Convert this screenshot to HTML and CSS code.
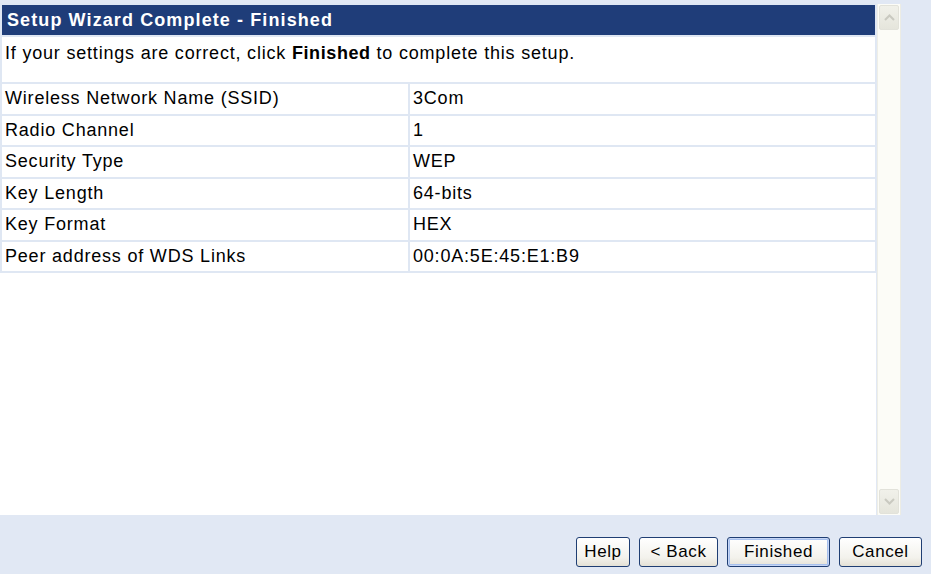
FILE: index.html
```html
<!DOCTYPE html>
<html lang="en">

<head>
  <meta charset="UTF-8">
  <title>Setup Wizard Complete</title>
  <link rel="stylesheet" href="styles.css">
</head>

<body>
  <!-- wizard frame with its own scrollbar -->
  <div class="frame">
    <div class="content">
      <table class="wizard">
        <tr>
          <th class="title" colspan="2">Setup Wizard Complete - Finished</th>
        </tr>
        <tr>
          <td class="intro" colspan="2">If your settings are correct, click <b>Finished</b> to complete this setup.</td>
        </tr>
        <tr>
          <td class="label">Wireless Network Name (SSID)</td>
          <td>3Com</td>
        </tr>
        <tr>
          <td class="label">Radio Channel</td>
          <td>1</td>
        </tr>
        <tr>
          <td class="label">Security Type</td>
          <td>WEP</td>
        </tr>
        <tr>
          <td class="label">Key Length</td>
          <td>64-bits</td>
        </tr>
        <tr>
          <td class="label">Key Format</td>
          <td>HEX</td>
        </tr>
        <tr>
          <td class="label">Peer address of WDS Links</td>
          <td>00:0A:5E:45:E1:B9</td>
        </tr>
      </table>
    </div>
    <div class="scrollbar">
      <div class="scroll-btn">
        <svg width="11" height="7" viewBox="0 0 11 7"><path d="M1 6 L5.5 1.5 L10 6" fill="none" stroke="#c9c9c0" stroke-width="2"/></svg>
      </div>
      <div class="scroll-btn">
        <svg width="11" height="7" viewBox="0 0 11 7"><path d="M1 1 L5.5 5.5 L10 1" fill="none" stroke="#c9c9c0" stroke-width="2"/></svg>
      </div>
    </div>
  </div>

  <!-- wizard buttons -->
  <div class="buttons">
    <button class="btn btn-help">Help</button>
    <button class="btn btn-back">&lt; Back</button>
    <button class="btn btn-finish">Finished</button>
    <button class="btn btn-cancel">Cancel</button>
  </div>
</body>

</html>
```
FILE: styles.css
```css
body {
  margin: 0;
  padding: 0;
  background-color: #e1e8f4;
  font-family: "Liberation Sans", Arial, sans-serif;
  font-size: 18px;
  letter-spacing: 0.8px;
  color: #000;
}

.frame {
  display: flex;
  margin-top: 3px;
  width: 901px;
  height: 512px;
}

.content {
  width: 877px;
  background: #fff;
  overflow: hidden;
}

.wizard {
  width: 877px;
  border-collapse: separate;
  border-spacing: 2px;
  background: #dfe7f3;
}

.wizard th,
.wizard td {
  padding: 0 3px;
  background: #fff;
  text-align: left;
  white-space: nowrap;
  height: 29.5px;
}

.wizard th.title {
  background: #1f3d79;
  color: #fff;
  font-weight: bold;
  height: 30px;
  padding-left: 5px;
  letter-spacing: 1.1px;
}

.wizard td.intro {
  height: 45px;
  vertical-align: top;
  padding-top: 6px;
  box-sizing: border-box;
}

.wizard td.intro b {
  letter-spacing: 0.6px;
}

.wizard td.label {
  width: 400px;
}

.scrollbar {
  width: 22px;
  margin-top: 1px;
  margin-left: 1px;
  background: #fcfcf7;
  border-left: 1px solid #eeeee6;
  border-right: 1px solid #ecece4;
  display: flex;
  flex-direction: column;
  justify-content: space-between;
}

.scroll-btn {
  height: 23px;
  margin: 1px 1px;
  background: linear-gradient(#f1f1ea, #e5e5dc);
  border: 1px solid #e2e2da;
  border-radius: 2px;
  display: flex;
  align-items: center;
  justify-content: center;
}

.buttons {
  display: flex;
  justify-content: flex-end;
  gap: 9px;
  padding: 22px 9px 0 0;
}

.btn {
  height: 30px;
  padding: 0;
  font-family: "Liberation Sans", Arial, sans-serif;
  font-size: 17px;
  letter-spacing: 0.6px;
  color: #000;
  border: 1px solid #1f3e73;
  border-radius: 3px;
  background: linear-gradient(#ffffff, #f3f2ec 70%, #e4e1d6);
}

.btn-help {
  width: 54px;
}

.btn-back {
  width: 79px;
}

.btn-finish {
  width: 103px;
  box-shadow: inset 0 0 0 1px #c5d5f5, inset 0 0 0 2px #a6c0ee;
}

.btn-cancel {
  width: 83px;
}
```
